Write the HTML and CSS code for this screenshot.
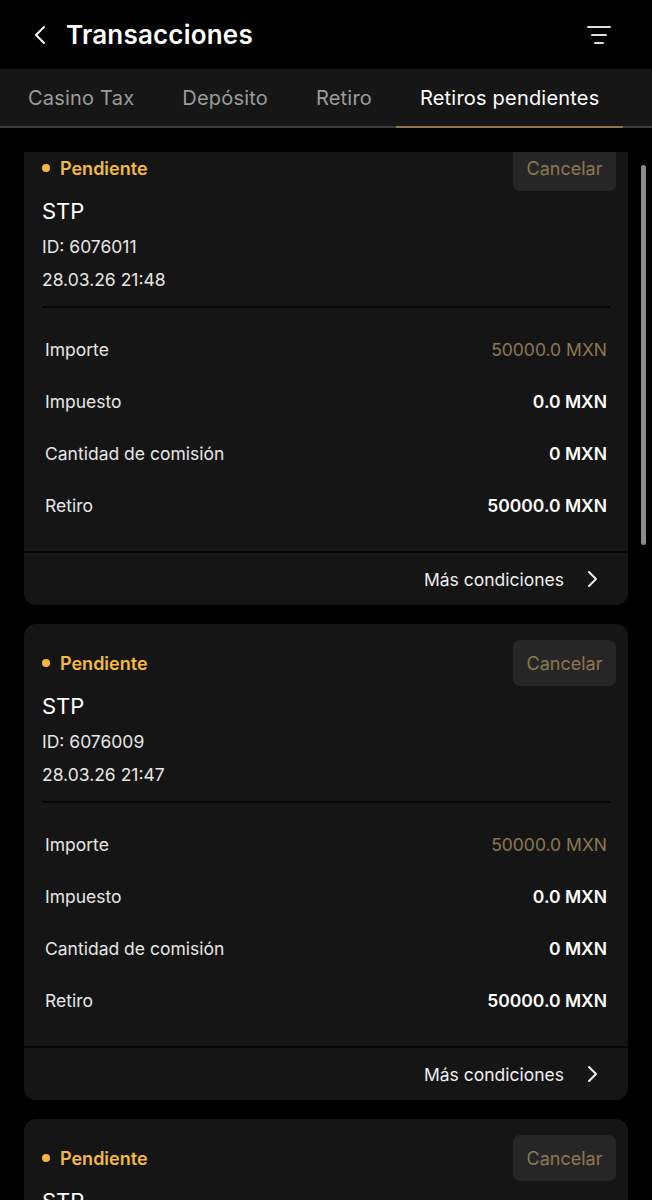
FILE: index.html
```html
<!DOCTYPE html>
<html lang="es">
<head>
    <meta charset="UTF-8">
    <meta name="viewport" content="width=device-width, initial-scale=1.0">
    <title>Transacciones</title>
    <link rel="stylesheet" href="styles.css">
</head>
<body>
    <header class="topbar">
        <div class="topbar-left">
            <svg class="back" width="14" height="22" viewBox="0 0 14 22"><path d="M11 3 L3 11 L11 19" fill="none" stroke="#fff" stroke-width="2" stroke-linecap="round" stroke-linejoin="round"/></svg>
            <h1>Transacciones</h1>
        </div>
        <svg class="filter" width="26" height="22" viewBox="0 0 26 22"><path d="M2 3 H24 M6 11 H20 M9 19 H17" stroke="#ddd" stroke-width="2" stroke-linecap="round"/></svg>
    </header>

    <nav class="tabs">
        <div class="tab">Casino Tax</div>
        <div class="tab">Depósito</div>
        <div class="tab">Retiro</div>
        <div class="tab active">Retiros pendientes</div>
    </nav>

    <main class="list">
        <div class="list-inner" id="list"></div>
        <div class="scrollbar"></div>
    </main>

    <script>
        const items = [
            { id: '6076011', date: '28.03.26 21:48' },
            { id: '6076009', date: '28.03.26 21:47' },
            { id: '6076007', date: '28.03.26 21:46' }
        ];

        const list = document.getElementById('list');

        items.forEach(item => {
            const card = document.createElement('section');
            card.className = 'card';
            card.innerHTML = `
                <div class="card-body">
                    <div class="card-top">
                        <div class="status"><span class="dot"></span>Pendiente</div>
                        <button class="cancel">Cancelar</button>
                    </div>
                    <div class="method">STP</div>
                    <div class="meta">ID: ${item.id}</div>
                    <div class="meta date">${item.date}</div>
                    <div class="divider"></div>
                    <div class="rows">
                        <div class="row"><span>Importe</span><span class="val gold">50000.0 MXN</span></div>
                        <div class="row"><span>Impuesto</span><span class="val">0.0 MXN</span></div>
                        <div class="row"><span>Cantidad de comisión</span><span class="val">0 MXN</span></div>
                        <div class="row"><span>Retiro</span><span class="val">50000.0 MXN</span></div>
                    </div>
                </div>
                <div class="card-foot">
                    <span>Más condiciones</span>
                    <svg width="12" height="18" viewBox="0 0 12 18"><path d="M3 2 L10 9 L3 16" fill="none" stroke="#eee" stroke-width="2" stroke-linecap="round" stroke-linejoin="round"/></svg>
                </div>`;
            list.appendChild(card);
        });
    </script>
</body>
</html>
```

FILE: styles.css
```css
body {
    margin: 0;
    background-color: #000;
    color: #fff;
    font-family: Inter, Roboto, "Liberation Sans", sans-serif;
    height: 1200px;
    overflow: hidden;
}

.topbar {
    height: 69px;
    display: flex;
    align-items: center;
    justify-content: space-between;
    padding: 0 40px 0 33px;
}

.topbar-left {
    display: flex;
    align-items: center;
    gap: 19px;
}

.back {
    display: block;
}

h1 {
    margin: 0;
    font-size: 26px;
    font-weight: 600;
    letter-spacing: 0.2px;
}

.filter {
    display: block;
}

.tabs {
    height: 59px;
    background-color: #161616;
    display: flex;
    padding-left: 4px;
    border-bottom: 2px solid #3c3c3c;
    box-sizing: border-box;
}

.tab {
    padding: 0 24px;
    display: flex;
    align-items: center;
    font-size: 20px;
    letter-spacing: 0.2px;
    color: #9c9c9c;
    margin-bottom: -2px;
    border-bottom: 2px solid transparent;
}

.tab.active {
    color: #fff;
    border-bottom-color: #8c7451;
}

.list {
    position: relative;
    margin-top: 24px;
    height: 1048px;
    overflow: hidden;
}

.list-inner {
    margin-top: -23px;
    padding: 0 24px;
    display: flex;
    flex-direction: column;
    gap: 19px;
}

.scrollbar {
    position: absolute;
    right: 6px;
    top: 13px;
    width: 5px;
    height: 380px;
    border-radius: 3px;
    background-color: #8a8a8a;
}

.card {
    background-color: #151515;
    border-radius: 12px;
    overflow: hidden;
}

.card-body {
    padding: 16px 12px 20px 18px;
}

.card-top {
    height: 46px;
    display: flex;
    align-items: center;
    justify-content: space-between;
}

.status {
    display: flex;
    align-items: center;
    gap: 10px;
    color: #f6b940;
    font-size: 18px;
    font-weight: 600;
}

.dot {
    width: 8px;
    height: 8px;
    border-radius: 50%;
    background-color: #f6b940;
}

.cancel {
    height: 46px;
    width: 103px;
    border: none;
    border-radius: 7px;
    background-color: #262626;
    color: #8d7853;
    font-family: inherit;
    font-size: 18px;
}

.method {
    margin-top: 6px;
    line-height: 28px;
    font-size: 22px;
}

.meta {
    margin-top: 9px;
    line-height: 26px;
    font-size: 17.5px;
    color: #e6e6e6;
}

.meta.date {
    margin-top: 7px;
}

.divider {
    margin: 13px 6px 0 0;
    height: 2px;
    background-color: #050505;
}

.rows {
    padding: 15px 9px 0 3px;
}

.row {
    height: 52px;
    display: flex;
    align-items: center;
    justify-content: space-between;
    font-size: 17.5px;
    color: #e6e6e6;
}

.val {
    color: #fff;
    font-weight: 600;
}

.val.gold {
    color: #8d7853;
    font-weight: 400;
}

.card-foot {
    height: 52px;
    border-top: 2px solid #050505;
    display: flex;
    align-items: center;
    justify-content: flex-end;
    gap: 22px;
    padding-right: 30px;
    font-size: 17.5px;
    color: #eee;
}

.card-foot svg {
    display: block;
}
```
